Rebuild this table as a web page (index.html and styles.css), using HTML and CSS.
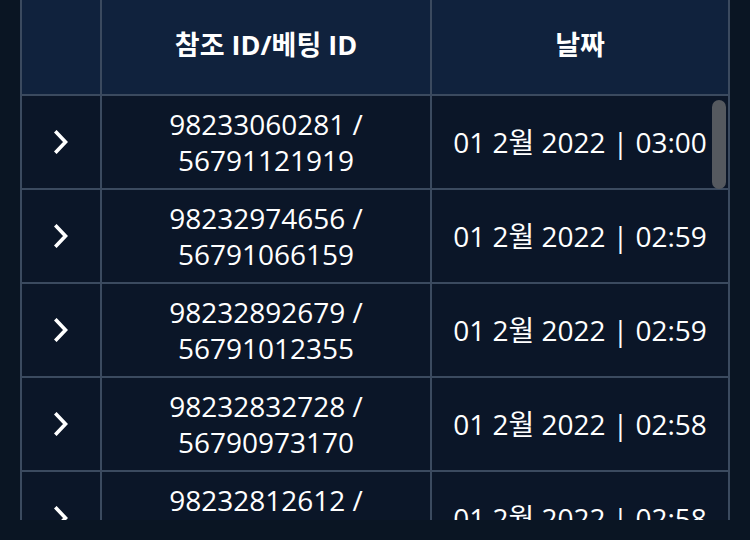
FILE: index.html
```html
<!DOCTYPE html>
<html lang="ko">
<head>
<meta charset="utf-8">
<link rel="stylesheet" href="styles.css">
</head>
<body>
<div class="viewport">
  <div class="grid">
    <div class="th"></div>
    <div class="th">참조 ID/베팅 ID</div>
    <div class="th">날짜</div>

    <div class="td chev"><svg viewBox="0 0 14 24" width="14" height="24"><path d="M2.5 2.5 L11.5 12 L2.5 21.5" fill="none" stroke="#fff" stroke-width="3.6" stroke-linecap="square"/></svg></div>
    <div class="td ids">98233060281 /<br>56791121919</div>
    <div class="td date">01 2월 2022 | 03:00</div>

    <div class="td chev"><svg viewBox="0 0 14 24" width="14" height="24"><path d="M2.5 2.5 L11.5 12 L2.5 21.5" fill="none" stroke="#fff" stroke-width="3.6" stroke-linecap="square"/></svg></div>
    <div class="td ids">98232974656 /<br>56791066159</div>
    <div class="td date">01 2월 2022 | 02:59</div>

    <div class="td chev"><svg viewBox="0 0 14 24" width="14" height="24"><path d="M2.5 2.5 L11.5 12 L2.5 21.5" fill="none" stroke="#fff" stroke-width="3.6" stroke-linecap="square"/></svg></div>
    <div class="td ids">98232892679 /<br>56791012355</div>
    <div class="td date">01 2월 2022 | 02:59</div>

    <div class="td chev"><svg viewBox="0 0 14 24" width="14" height="24"><path d="M2.5 2.5 L11.5 12 L2.5 21.5" fill="none" stroke="#fff" stroke-width="3.6" stroke-linecap="square"/></svg></div>
    <div class="td ids">98232832728 /<br>56790973170</div>
    <div class="td date">01 2월 2022 | 02:58</div>

    <div class="td chev"><svg viewBox="0 0 14 24" width="14" height="24"><path d="M2.5 2.5 L11.5 12 L2.5 21.5" fill="none" stroke="#fff" stroke-width="3.6" stroke-linecap="square"/></svg></div>
    <div class="td ids">98232812612 /<br>56790950000</div>
    <div class="td date">01 2월 2022 | 02:58</div>
  </div>
  <div class="thumb"></div>
</div>
</body>
</html>
```

FILE: styles.css
```css
html, body {
  margin: 0;
  padding: 0;
  background: #0a1523;
}
body {
  width: 750px;
  height: 540px;
  overflow: hidden;
  font-family: "Open Sans", "Noto Sans CJK KR", sans-serif;
  color: #ffffff;
}
.viewport {
  position: relative;
  margin: 0 20px;
  height: 520px;
  overflow: hidden;
}
.grid {
  display: grid;
  grid-template-columns: 78px 328px 296px;
  grid-auto-rows: 92px;
  grid-template-rows: 94px;
  gap: 2px;
  padding: 0 2px 2px;
  background: #3b4a5f;
  width: max-content;
}
.th {
  background: #10223d;
  display: flex;
  align-items: center;
  justify-content: center;
  font-weight: 700;
  font-size: 27px;
  padding-bottom: 8px;
  box-sizing: border-box;
}
.td {
  background: #0b1628;
  display: flex;
  align-items: center;
  justify-content: center;
  text-align: center;
  font-size: 28px;
  line-height: 36px;
}
.thumb {
  position: absolute;
  left: 692px;
  top: 100px;
  width: 14px;
  height: 89px;
  border-radius: 7px;
  background: #55595f;
}
```
